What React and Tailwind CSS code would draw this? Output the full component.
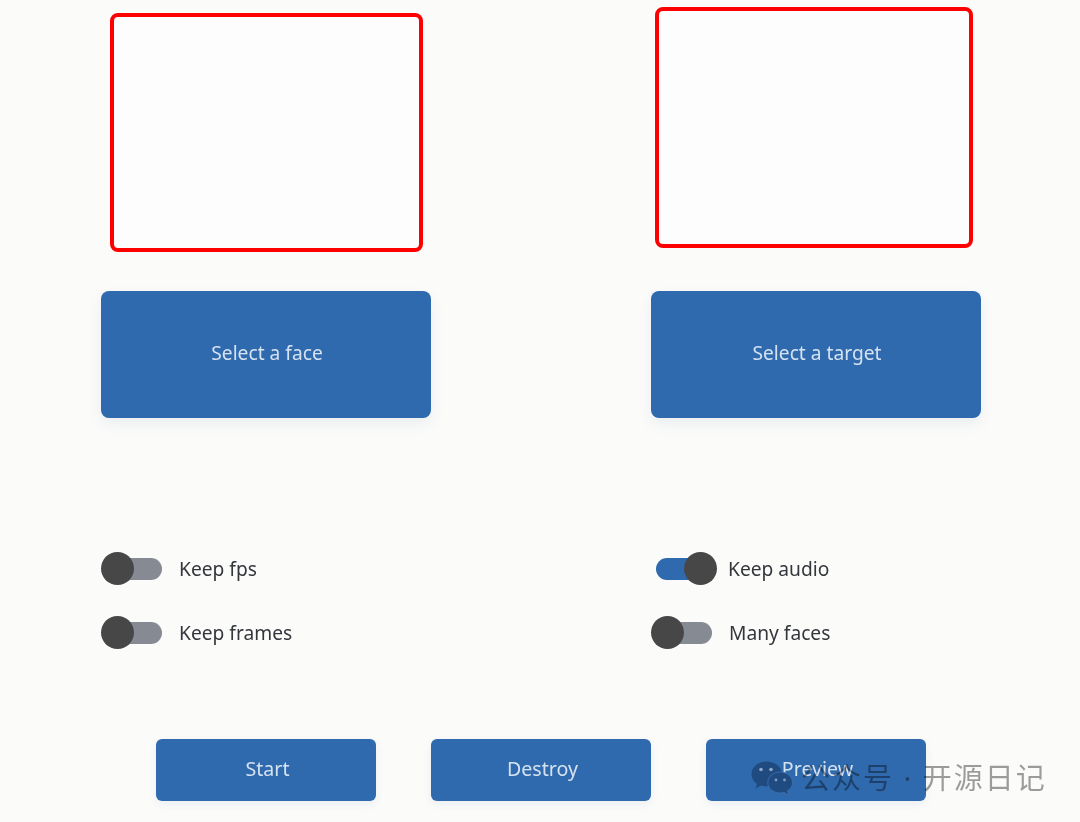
import React from "react";

function BigButton({ label }) {
  return (
    <button className="w-[330px] h-[127px] pb-[2px] pl-[2px] rounded-[8px] bg-[#2f69ae] text-[#d5e2f0] text-[19.2px] shadow-[0_6px_14px_rgba(40,80,130,0.08)] flex items-center justify-center">
      <span className="blur-[0.4px]">{label}</span>
    </button>
  );
}

function SmallButton({ label }) {
  return (
    <button className="w-[220px] h-[62px] pb-[2px] pl-[3px] rounded-[6px] bg-[#2f69ae] text-[#d5e2f0] text-[19.6px] shadow-[0_3px_8px_rgba(40,80,130,0.08)] flex items-center justify-center">
      <span className="blur-[0.4px]">{label}</span>
    </button>
  );
}

function Toggle({ on, label }) {
  return (
    <div className="flex items-center h-[33px]">
      <div className={on ? "relative w-[61px] h-[33px] flex items-center justify-start ml-[5px]" : "relative w-[61px] h-[33px] flex items-center justify-end"}>
        <div className={on ? "w-[45px] h-[22px] rounded-full bg-[#2f69ae]" : "w-[45px] h-[22px] rounded-full bg-[#868a92]"} />
        <div className={on ? "absolute right-0 top-0 w-[33px] h-[33px] rounded-full bg-[#474747]" : "absolute left-0 top-0 w-[33px] h-[33px] rounded-full bg-[#474747]"} />
      </div>
      <span className={on ? "ml-[11px] pt-[2px] text-[19.2px] text-[#33363b] blur-[0.3px]" : "ml-[17px] pt-[2px] text-[19.2px] text-[#33363b] blur-[0.3px]"}>{label}</span>
    </div>
  );
}

export default function App() {
  return (
    <div
      className="relative w-[1080px] h-[822px] overflow-hidden bg-[#fbfbfa]"
      style={{ fontFamily: '"Noto Sans", "Noto Sans CJK SC", sans-serif' }}
    >
      <div className="flex items-start h-[291px]">
        <div className="ml-[110px] mt-[13px] w-[313px] h-[239px] rounded-[8px] border-[4px] border-[#ff0000] bg-[#fdfdfd]" />
        <div className="ml-[232px] mt-[7px] w-[318px] h-[241px] rounded-[8px] border-[4px] border-[#ff0000] bg-[#fdfdfd]" />
      </div>

      <div className="flex pl-[101px] gap-[220px]">
        <BigButton label="Select a face" />
        <BigButton label="Select a target" />
      </div>

      <div className="flex pl-[101px] mt-[134px]">
        <div className="w-[550px] flex flex-col gap-[31px]">
          <Toggle label="Keep fps" />
          <Toggle label="Keep frames" />
        </div>
        <div className="flex flex-col gap-[31px]">
          <Toggle on label="Keep audio" />
          <Toggle label="Many faces" />
        </div>
      </div>

      <div className="flex pl-[156px] gap-[55px] mt-[90px]">
        <SmallButton label="Start" />
        <SmallButton label="Destroy" />
        <SmallButton label="Preview" />
      </div>

      <div className="absolute left-[751px] top-[758px] flex items-center text-[rgba(0,0,0,0.38)]">
        <svg width="42" height="36" viewBox="0 0 42 36" className="mr-[8px]">
          <path
            d="M15.500 1.500C7 1.500.5 7.200.5 14.200c0 4 2.100 7.400 5.400 9.700L4.500 28.500l5.500-3c1.700.5 3.500.8 5.500.8 8 0 15.500-5.500 15.500-12.100C31 7.200 24 1.500 15.500 1.500Z"
            fill="#204b80"
          />
          <path
            d="M41.500 22.500c0-5.800-5.500-10.500-12.300-10.500S16.800 16.700 16.800 22.500 22.400 33 29.200 33c1.400 0 2.700-.2 3.900-.6l4.600 2.600-1.200-4.200c3.600-1.900 5-5 5-8.300Z"
            fill="#204b80"
            stroke="#3f74b2"
            strokeWidth="0.8"
          />
          <circle cx="10" cy="9.500" r="1.800" fill="#8fa9c8" />
          <circle cx="20" cy="9.500" r="1.800" fill="#8fa9c8" />
          <circle cx="25" cy="20" r="1.400" fill="#7f9cc0" />
          <circle cx="33.500" cy="20" r="1.400" fill="#7f9cc0" />
        </svg>
        <span className="text-[29px] leading-[40px] tracking-[2px] blur-[0.3px]">公众号 · 开源日记</span>
      </div>
    </div>
  );
}
